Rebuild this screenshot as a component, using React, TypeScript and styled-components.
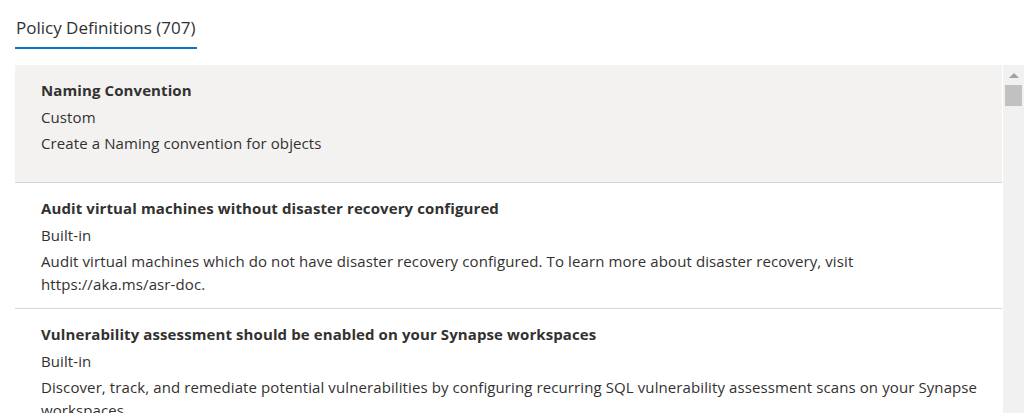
import React from "react";
import styled, { createGlobalStyle } from "styled-components";

interface iPolicy {
  name: string;
  kind: string;
  description: string;
}

const policies: iPolicy[] = [
  {
    name: "Naming Convention",
    kind: "Custom",
    description: "Create a Naming convention for objects",
  },
  {
    name: "Audit virtual machines without disaster recovery configured",
    kind: "Built-in",
    description:
      "Audit virtual machines which do not have disaster recovery configured. To learn more about disaster recovery, visit https://aka.ms/asr-doc.",
  },
  {
    name: "Vulnerability assessment should be enabled on your Synapse workspaces",
    kind: "Built-in",
    description:
      "Discover, track, and remediate potential vulnerabilities by configuring recurring SQL vulnerability assessment scans on your Synapse workspaces.",
  },
];

const App: React.FC = () => {
  return (
    <Page>
      <GlobalStyle />
      <TabBar>
        <Tab>Policy Definitions (707)</Tab>
      </TabBar>
      <Body>
        <List>
          {policies.map((p, i) => (
            <Item key={p.name} selected={i === 0}>
              <Title>{p.name}</Title>
              <Kind>{p.kind}</Kind>
              <Description>{p.description}</Description>
            </Item>
          ))}
        </List>
        <Scrollbar>
          <Arrow />
          <Thumb />
        </Scrollbar>
      </Body>
    </Page>
  );
};

export default App;

const GlobalStyle = createGlobalStyle`
html, body {
margin: 0;
padding: 0;
background: #ffffff;
overflow: hidden;
}
body {
font-family: "Open Sans", "Noto Sans", "Liberation Sans", sans-serif;
color: #323130;
}
`;

const Page = styled.div`
width: 1034px;
height: 413px;
overflow: hidden;
display: flex;
flex-direction: column;
`;

const TabBar = styled.div`
display: flex;
padding: 15px 0 0 15px;
height: 50px;
box-sizing: border-box;
`;

const Tab = styled.div`
font-size: 17px;
line-height: 26px;
padding: 0 2px 6px 1px;
height: 34px;
box-sizing: border-box;
border-bottom: 2px solid #0078d4;
color: #323130;
`;

const Body = styled.div`
flex: 1;
display: flex;
padding: 15px 10px 0 15px;
gap: 1px;
min-height: 0;
`;

const List = styled.div`
flex: 1;
display: flex;
flex-direction: column;
overflow: hidden;
`;

const Item = styled.div<{ selected: boolean }>`
background: ${({ selected }) => (selected ? "#f3f2f1" : "#ffffff")};
border-bottom: 1px solid #d8d6d4;
padding: 15px 18px 12px 26px;
min-height: 118px;
box-sizing: border-box;
display: flex;
flex-direction: column;
flex-shrink: 0;
font-size: 15px;
letter-spacing: 0.1px;
`;

const Title = styled.div`
font-weight: 700;
line-height: 20px;
`;

const Kind = styled.div`
margin-top: 7px;
line-height: 20px;
`;

const Description = styled.div`
margin-top: 5px;
line-height: 23px;
`;

const Scrollbar = styled.div`
width: 21px;
background: #f1f1f1;
display: flex;
flex-direction: column;
align-items: center;
padding-top: 8px;
gap: 7px;
`;

const Arrow = styled.div`
width: 0;
height: 0;
border-left: 5px solid transparent;
border-right: 5px solid transparent;
border-bottom: 5px solid #a3a3a3;
`;

const Thumb = styled.div`
width: 17px;
height: 21px;
background: #c1c1c1;
`;
